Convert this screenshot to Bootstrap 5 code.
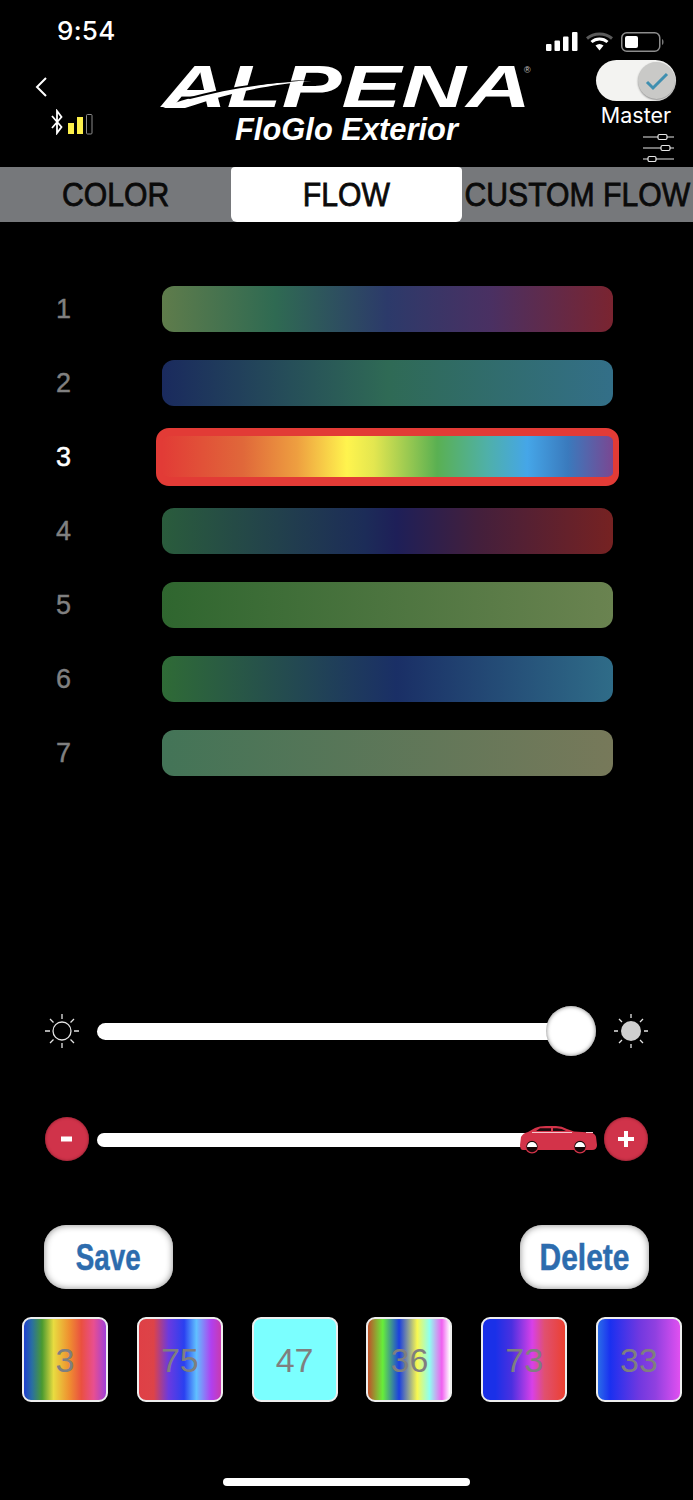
<!doctype html>
<html lang="en">
<head>
<meta charset="utf-8">
<title>Alpena FloGlo Exterior</title>
<link href="https://cdn.jsdelivr.net/npm/bootstrap@5.3.0/dist/css/bootstrap.min.css" rel="stylesheet">
<style>
html,body{background:#000;margin:0}
body{width:693px;height:1500px;overflow:hidden;font-family:"Liberation Sans",Arial,sans-serif;color:#fff}
.hdr{display:grid;grid-template-columns:160px 385px 148px;height:167px}
.hdr-left{padding-top:17px}
.clock{font-family:Inter,"Liberation Sans",sans-serif;font-weight:500;font-size:26px;line-height:28px;margin-left:57px;letter-spacing:.3px}
.chev{display:block;margin:32px 0 0 35px}
.btrow{display:flex;align-items:flex-end;margin:12px 0 0 51px;gap:5px}
.logo-svg{display:block;margin-top:50px}
.logo-main{font-family:"Liberation Sans",sans-serif;font-weight:700;font-style:italic;font-size:59px;fill:#fff}
.logo-sub{font-family:"Liberation Sans",sans-serif;font-weight:700;font-style:italic;font-size:30.5px;fill:#fff}
.logo-r{font-family:"Liberation Sans",sans-serif;font-size:9px;fill:#ccc}
.hdr-right{padding-top:32px;display:flex;flex-direction:column}
.status-icons{display:flex;align-items:center;margin-left:1px;gap:8px;height:19px}
.toggle-pill{width:80px;height:41px;border-radius:21px;background:#f3f3f1;margin:9px 0 0 51px;display:flex;justify-content:flex-end;align-items:center;padding-right:1px}
.toggle-knob{width:37px;height:37px;border-radius:50%;background:#c9c9c7;box-shadow:0 1px 2px #8a8a8a;display:flex;align-items:center;justify-content:center}
.master{font-family:Inter,"Liberation Sans",sans-serif;font-size:21.5px;line-height:24px;margin:2px 0 0 55px;width:72px;text-align:center;white-space:nowrap}
.tune{display:block;margin:6px 0 0 97px}
.tabbar{display:grid;grid-template-columns:231px 231px 231px;height:55px;background:#76787b}
.tabitem{display:flex;align-items:center;justify-content:center;font-size:33.5px;color:#0a0a0a;-webkit-text-stroke:.8px #0a0a0a;white-space:nowrap;line-height:1;text-decoration:none}
.tabitem span{display:inline-block;transform:scaleX(.9)}
.tabitem.on{background:#fff;border-radius:4px 4px 6px 6px}
.flows{padding-top:64px}
.flow-row{display:flex;align-items:center;height:46px;margin-bottom:28px}
.flow-num{width:162px;padding-left:56px;font-size:27px;color:#808080;line-height:1;-webkit-text-stroke:.4px #808080}
.flow-row.sel .flow-num{color:#fff;-webkit-text-stroke:.5px #fff}
.flow-bar{width:451px;height:46px;border-radius:12px}
.flow-row.sel .flow-bar{width:463px;height:58px;margin-left:-6px;border:solid #e23b36;border-width:8px 6px 9px;border-radius:13px;box-sizing:border-box}
.g1{background:linear-gradient(90deg,#5f7c4b,#2f6a52 25%,#2c3a6a 50%,#4a3062 73%,#7a2430)}
.g2{background:linear-gradient(90deg,#1a2a5e,#2f6a55 50%,#336f88)}
.g3{background:linear-gradient(90deg,#e23b36,#e0683a 18%,#ee9f40 30%,#fff44e 41%,#e3e650 47%,#5ab052 61%,#4fb0a8 72%,#45a6e8 81%,#3a7abd 90%,#7a4792)}
.g4{background:linear-gradient(90deg,#2a5c3c,#1c2c58 45%,#1e1f58 52%,#431f3c 70%,#762222)}
.g5{background:linear-gradient(90deg,#2f662f,#6a8350)}
.g6{background:linear-gradient(90deg,#2f6b36,#1a2f66 52%,#2f6c88)}
.g7{background:linear-gradient(90deg,#437457,#77795a)}
.bright-row{display:flex;align-items:center;height:50px;margin-top:230px;padding-left:45px}
.rail{height:17px;width:480px;margin-left:18px;border-radius:9px;background:#fff}
.thumb{width:50px;height:50px;border-radius:50%;background:#fff;margin-left:-31px;box-shadow:inset 0 0 4px #777;flex:none;position:relative}
.sun{display:block;flex:none}
.sun-end{margin-left:18px}
.speed-row{display:flex;align-items:center;height:44px;margin-top:61px;padding-left:45px}
.round-btn{width:44px;height:44px;border-radius:50%;background:#d0334a;color:#fff;border:0;padding:0;font-weight:700;display:flex;align-items:center;justify-content:center;flex:none;box-shadow:inset 0 0 3px #7d1c2a}
.round-btn svg{display:block}
.speed-track{position:relative;width:499px;height:14px;margin:2px 0 0 8px;border-radius:7px;background:#fff;flex:none}
.car{position:absolute;right:-1px;top:-7px;display:block}
.round-end{margin-left:8px}
.action-row{display:flex;justify-content:space-between;height:64px;margin-top:64px;padding:0 44px}
.action-btn{width:129px;height:64px;border-radius:22px;background:#fff;border:0;padding:0;box-shadow:inset 0 0 7px #8a8a8a;color:#2d6cae;font-weight:700;font-size:37px;line-height:1;display:flex;align-items:center;justify-content:center;-webkit-text-stroke:.5px #2d6cae}
.action-btn:hover,.action-btn:active{background:#fff;color:#2d6cae}
.squeeze{display:inline-block;transform:scaleX(.75)}
.squeeze-wide{display:inline-block;transform:scaleX(.81)}
.swatches{display:flex;justify-content:space-between;margin-top:28px;padding:0 11px 0 22px}
.swatch{width:86px;height:85px;border:2px solid #eee;border-radius:9px;display:flex;align-items:center;justify-content:center;color:#7f7f7f;font-size:34px;line-height:1}
.s1{background:linear-gradient(90deg,#1f3fd0,#2a70a0 10%,#4a9a30 22%,#e8dc40 36%,#ef9030 55%,#ea5040 70%,#e84f90 85%,#a040d8)}
.s2{background:linear-gradient(90deg,#df4046,#dd4348 18%,#6a3ae0 36%,#2a40f0 55%,#60c0ff 70%,#b040f0 88%,#c83ab0)}
.s3{background:#7bffff}
.s4{background:linear-gradient(90deg,#c0502a,#66ee3a 18%,#1b3fe0 38%,#f8f850 60%,#8ffff0 75%,#f060f0 90%,#fff)}
.s5{background:linear-gradient(90deg,#1a30e8,#1a30e8 15%,#4a30e0 35%,#d840e8 60%,#e05070 75%,#ec4030)}
.s6{background:linear-gradient(90deg,#2a6ce8,#1a30f0 15%,#7038e0 50%,#9040e0 70%,#e050f0)}
.home-bar{width:247px;height:8px;border-radius:4px;background:#fff;margin:76px 0 0 223px}
</style>
</head>
<body>
<header class="hdr">
  <div class="hdr-left">
    <div class="clock">9:54</div>
    <svg class="chev" width="12" height="20" viewBox="0 0 12 20"><path d="M11 1 2 10l9 9" fill="none" stroke="#fff" stroke-width="2"/></svg>
    <div class="btrow">
      <svg width="12" height="26" viewBox="0 0 12 26"><path d="M1 7 10.500 18 6 24V2l4.500 6L1 19" fill="none" stroke="#fff" stroke-width="1.800"/></svg>
      <svg width="25" height="21" viewBox="0 0 25 21"><rect y="9" width="6" height="11" fill="#fdf04b"/><rect x="9" y="3" width="6" height="17" fill="#fdf04b"/><rect x="18.500" y=".5" width="5.500" height="19.500" rx="1" fill="none" stroke="#8a8a8a"/></svg>
    </div>
  </div>
  <div>
    <svg class="logo-svg" width="385" height="100" viewBox="0 0 385 100">
      <text class="logo-main" x="2" y="57" textLength="369" lengthAdjust="spacingAndGlyphs">ALPENA</text>
      <path d="M3 58C35 43 90 33 152 31 100 36 70 43 25 58Z" fill="#fff"/>
      <path d="M30 49C70 38 110 33 150 30 110 31 70 36 26 48Z" fill="#000"/>
      <text class="logo-r" x="364" y="23">®</text>
      <text class="logo-sub" x="75" y="90" textLength="223" lengthAdjust="spacingAndGlyphs">FloGlo Exterior</text>
    </svg>
  </div>
  <div class="hdr-right">
    <div class="status-icons">
      <svg width="32" height="19" viewBox="0 0 32 19"><rect y="12" width="5.500" height="7" rx="1" fill="#fff"/><rect x="8.500" y="8.500" width="5.500" height="10.500" rx="1" fill="#fff"/><rect x="17" y="4.500" width="5.500" height="14.500" rx="1" fill="#fff"/><rect x="26" width="5.500" height="19" rx="1" fill="#fff"/></svg>
      <svg width="27" height="19" viewBox="0 0 27 19"><path d="M1 6.500C8 .5 19 .5 26 6.500" fill="none" stroke="#5a5a5a" stroke-width="3"/><path d="M5.500 10C10 6 17 6 21.500 10" fill="none" stroke="#fff" stroke-width="3"/><path d="M9.500 13.500c2.500-2 5.500-2 8 0L13.500 18.500Z" fill="#fff"/></svg>
      <svg width="44" height="20" viewBox="0 0 44 20"><rect x=".75" y=".75" width="38" height="18.500" rx="5" fill="none" stroke="#8c8c8c" stroke-width="1.500"/><rect x="4" y="4" width="13" height="12" rx="2" fill="#fff"/><path d="M41 7c2 .5 2 5.500 0 6Z" fill="#777"/></svg>
    </div>
    <div class="toggle-pill"><div class="toggle-knob"><svg width="24" height="20" viewBox="0 0 24 20"><path d="M2 11l6 6L22 3" fill="none" stroke="#3f8fb0" stroke-width="3"/></svg></div></div>
    <div class="master">Master</div>
    <svg class="tune" width="33" height="29" viewBox="0 0 33 29"><g fill="none" stroke="#e8e8e8" stroke-width="1.200"><path d="M1 4h15M25 4h7M1 15h18M28 15h4M1 26h5M14 26h18"/><rect x="16" y="1.500" width="9" height="5" rx="1.500"/><rect x="19" y="12.500" width="9" height="5" rx="1.500"/><rect x="6" y="23.500" width="8" height="5" rx="1.500"/></g></svg>
  </div>
</header>

<nav class="tabbar nav">
  <a class="tabitem" href="#"><span>COLOR</span></a>
  <a class="tabitem on" href="#"><span>FLOW</span></a>
  <a class="tabitem" href="#"><span>CUSTOM FLOW</span></a>
</nav>

<section class="flows">
  <div class="flow-row"><div class="flow-num">1</div><div class="flow-bar g1"></div></div>
  <div class="flow-row"><div class="flow-num">2</div><div class="flow-bar g2"></div></div>
  <div class="flow-row sel"><div class="flow-num">3</div><div class="flow-bar g3"></div></div>
  <div class="flow-row"><div class="flow-num">4</div><div class="flow-bar g4"></div></div>
  <div class="flow-row"><div class="flow-num">5</div><div class="flow-bar g5"></div></div>
  <div class="flow-row"><div class="flow-num">6</div><div class="flow-bar g6"></div></div>
  <div class="flow-row"><div class="flow-num">7</div><div class="flow-bar g7"></div></div>
</section>

<div class="bright-row">
  <svg class="sun" width="34" height="34" viewBox="0 0 34 34"><circle cx="17" cy="17" r="9" fill="none" stroke="#e4e4e4" stroke-width="1.300"/><path d="M17 0v5M17 29v5M0 17h5M29 17h5M5 5l3.500 3.500M25.500 25.500 29 29M29 5l-3.500 3.500M8.500 25.500 5 29" stroke="#e4e4e4" stroke-width="1.300"/></svg>
  <div class="rail"></div>
  <div class="thumb"></div>
  <svg class="sun sun-end" width="34" height="34" viewBox="0 0 34 34"><circle cx="17" cy="17" r="10" fill="#cfcfcf"/><path d="M17 0v4M17 30v4M0 17h4M30 17h4M5 5l3 3M26 26l3 3M29 5l-3 3M8 26l-3 3" stroke="#e4e4e4" stroke-width="1.300"/></svg>
</div>

<div class="speed-row">
  <button class="round-btn btn" type="button" aria-label="Slower"><svg width="12" height="6" viewBox="0 0 12 6"><rect y=".5" width="11" height="5" fill="#fff"/></svg></button>
  <div class="speed-track">
    <svg class="car" width="77" height="28" viewBox="0 0 77 28">
      <path d="M1 11Q3 7 8 6L15 2Q19 0 26 0H36Q42 0 47 3L54 5.500 70 6.500Q75 7 76 11L77 19Q77 24 72 24H3Q0 24 0 19Z" fill="#d33349"/>
      <path d="M16 5 20 2.200H31V5ZM33 2.200H37Q42 2.200 46 5H33Z" fill="#1a0a0d"/>
      <path d="M12 6.500H52M66 6.500H73" stroke="#f3c4cb" stroke-width="1"/>
      <circle cx="12" cy="20.500" r="6.300" fill="#150507" stroke="#d33349" stroke-width="1.300"/>
      <path d="M7 21a5 5 0 0 1 10 0Z" fill="#fff"/>
      <circle cx="60" cy="20.500" r="6.300" fill="#150507" stroke="#d33349" stroke-width="1.300"/>
      <path d="M55 21a5 5 0 0 1 10 0Z" fill="#fff"/>
    </svg>
  </div>
  <button class="round-btn round-end btn" type="button" aria-label="Faster"><svg width="16" height="16" viewBox="0 0 16 16"><path d="M6 0h4v6h6v4h-6v6H6v-6H0V6h6Z" fill="#fff"/></svg></button>
</div>

<div class="action-row">
  <button class="action-btn btn" type="button"><span class="squeeze">Save</span></button>
  <button class="action-btn btn" type="button"><span class="squeeze-wide">Delete</span></button>
</div>

<div class="swatches">
  <div class="swatch s1">3</div>
  <div class="swatch s2">75</div>
  <div class="swatch s3">47</div>
  <div class="swatch s4">36</div>
  <div class="swatch s5">73</div>
  <div class="swatch s6">33</div>
</div>

<div class="home-bar"></div>

<script src="https://cdn.jsdelivr.net/npm/bootstrap@5.3.0/dist/js/bootstrap.bundle.min.js"></script>
</body>
</html>
